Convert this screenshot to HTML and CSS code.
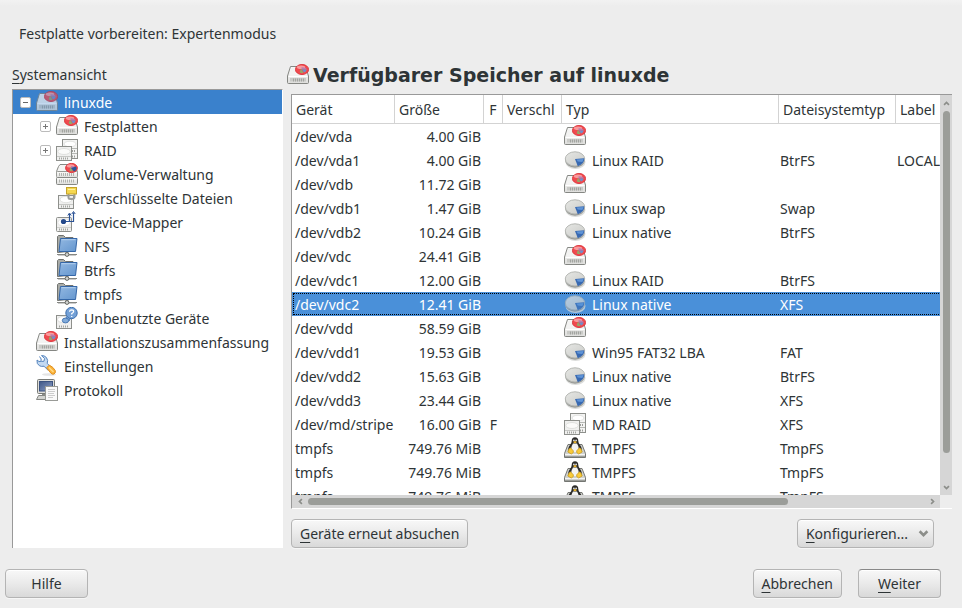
FILE: index.html
```html
<!DOCTYPE html>
<html lang="de">
<head>
<meta charset="utf-8">
<title>Festplatte vorbereiten: Expertenmodus</title>
<link rel="stylesheet" href="styles.css">
</head>
<body>
<svg class="sprite" aria-hidden="true">
  <defs>
    <linearGradient id="metal" x1="0" y1="0" x2="0" y2="1"><stop offset="0" stop-color="#fbfbfa"/><stop offset="1" stop-color="#dededc"/></linearGradient>
    <linearGradient id="plate" x1="0" y1="0" x2="1" y2="1"><stop offset="0" stop-color="#e6e7e4"/><stop offset="1" stop-color="#c9cac7"/></linearGradient>
    <linearGradient id="blue" x1="0" y1="0" x2="1" y2="1"><stop offset="0" stop-color="#93b8e1"/><stop offset="1" stop-color="#6496cf"/></linearGradient>
    <linearGradient id="screen" x1="0" y1="0" x2="1" y2="1"><stop offset="0" stop-color="#3f5786"/><stop offset="1" stop-color="#8d9fc6"/></linearGradient>
    <symbol id="disc" viewBox="0 0 14 11">
      <ellipse cx="7" cy="5.500" rx="6.600" ry="5.100" fill="#f04a4f" stroke="#d9242b" stroke-width=".8"/>
      <ellipse cx="6" cy="3.200" rx="4.200" ry="1.800" fill="#f99a9c"/>
      <path d="M6.500 5.500V3.200q4.500-.2 5.200 2.300z" fill="#b87fae"/>
      <path d="M7 5.500h4.700q-.5 2.300-2.700 3z" fill="#6c90cc"/>
      <path d="M6 4.500l2.500 4.500q-2.600.3-3.800-.8z" fill="#94a86a"/>
    </symbol>
    <symbol id="drive" viewBox="0 0 22 22">
      <path d="M3.500 2.500h15l3 9.500v6.500q0 1-1 1h-19q-1 0-1-1V12z" fill="url(#metal)" stroke="#858783"/>
      <path d="M4.500 3.500h13l2.500 8.500H2z" fill="#f3f3f2"/>
      <path d="M1.500 12.500h19" stroke="#fff"/>
      <path d="M3 14h16v3.500H3z" fill="#c9cac7"/>
      <path d="M6.500 14.500v3m2-3v3m2-3v3m2-3v3m2-3v3m2-3v3" stroke="#a3a5a1"/>
      <use href="#disc" x="8" y="0" width="14" height="11"/>
    </symbol>
    <symbol id="part" viewBox="0 0 22 22">
      <ellipse cx="11.500" cy="13" rx="10" ry="7" fill="#dcdddb"/>
      <ellipse cx="11" cy="11.500" rx="9.800" ry="7.200" fill="#999b97"/>
      <ellipse cx="11" cy="9.900" rx="9.700" ry="7.100" fill="url(#plate)" stroke="#b5b7b3"/>
      <path d="M11 10l9.300-.8q.3 5.500-6.500 8z" fill="#3869b1"/>
      <path d="M12.500 10.600l7-.6q-.2 1.800-1.300 3l-4.500-.5z" fill="#6094d6"/>
    </symbol>
    <symbol id="raid" viewBox="0 0 22 22">
      <rect x="6.500" y=".5" width="15" height="19" fill="#f4f4f3" stroke="#8e908c"/>
      <ellipse cx="14" cy="5" rx="6" ry="2.800" fill="#fff" stroke="#d6d7d4" stroke-width=".7"/>
      <path d="M7 9.500h14M7 14.500h14" stroke="#b5b7b3"/>
      <path d="M16 12h4m-4 5.500h4" stroke="#9b9d99" stroke-width="2" stroke-dasharray="1 1"/>
      <rect x=".5" y="7.500" width="15" height="14" fill="#f0f0ef" stroke="#8e908c"/>
      <ellipse cx="8" cy="12.500" rx="6.200" ry="3" fill="#fbfbfa" stroke="#d6d7d4" stroke-width=".7"/>
      <path d="M1 17.500h14" stroke="#c6c7c4"/>
      <path d="M3 19.500h10" stroke="#a3a5a1" stroke-width="2" stroke-dasharray="1 1"/>
    </symbol>
    <symbol id="volume" viewBox="0 0 22 22">
      <path d="M2.500 3.500L4 1.500h14l3.500 7v4H.5v-4z" fill="#f4f4f3" stroke="#858783"/>
      <rect x=".5" y="8.500" width="21" height="6" rx="1" fill="url(#metal)" stroke="#999b97"/>
      <rect x=".5" y="14.500" width="21" height="7" rx="1" fill="url(#metal)" stroke="#858783"/>
      <path d="M3 11.500h15M3 18h15" stroke="#b2b4b0" stroke-width="3" stroke-dasharray="1 1"/>
      <use href="#disc" x="9" y="0" width="13" height="10"/>
      <path d="M15 5l5-1.500q2 3-2 5z" fill="#27559a"/>
    </symbol>
    <symbol id="crypt" viewBox="0 0 22 22">
      <rect x="2.500" y="8.500" width="15" height="13" fill="#f0f0ef" stroke="#8e908c"/>
      <ellipse cx="10" cy="12.500" rx="6" ry="3.200" fill="#fff" stroke="#d6d7d4" stroke-width=".7"/>
      <path d="M3 17.500h14" stroke="#c6c7c4"/><path d="M5 19.500h10" stroke="#a3a5a1" stroke-width="2" stroke-dasharray="1 1"/>
      <path d="M12.500 7v3.500q0 1.500 2 1.500h1.500q2.500 0 2.500-2V7" fill="none" stroke="#9b9d99" stroke-width="2"/>
      <rect x="10.500" y=".5" width="10" height="6.500" fill="#f5d74f" stroke="#c5a22a"/>
      <path d="M12 2.500h7" stroke="#fff2a0"/>
    </symbol>
    <symbol id="mapper" viewBox="0 0 22 22">
      <rect x=".5" y="6.500" width="15" height="14" rx="1" fill="#f0f0ef" stroke="#8e908c"/>
      <ellipse cx="8" cy="11.500" rx="6.200" ry="3.600" fill="#fff" stroke="#dcdddb" stroke-width=".7"/>
      <path d="M3 18.500h10" stroke="#a3a5a1" stroke-width="2" stroke-dasharray="1 1"/>
      <path d="M1 16.500h14" stroke="#d0d1ce"/>
      <path d="M8 10.500h9.500v-9m-4 9V3" fill="none" stroke="#2c5396" stroke-width="1.200"/>
      <path d="M11.800 4.500l1.700-2.500 1.700 2.500M15.800 3L17.500.5 19.200 3" fill="none" stroke="#2c5396"/>
      <circle cx="7.500" cy="10.500" r="2.600" fill="#23488a"/>
    </symbol>
    <symbol id="netfolder" viewBox="0 0 22 22">
      <path d="M1.500 17.500V1.500l1-1h5l2 2h7.500V16z" fill="#a9aba7" stroke="#70726e"/>
      <path d="M4 4.500h12" stroke="#ddd"/>
      <path d="M4.500 3.500h16.500l-1.500 13H3z" fill="url(#blue)" stroke="#3567a8"/>
      <path d="M5.500 4.700h14" stroke="#b4d0ee"/>
      <path d="M1 19.500h20" stroke="#858783"/><path d="M2 20.500h18" stroke="#ccc"/>
      <path d="M11 17v3" stroke="#858783" stroke-width="3"/>
      <circle cx="11" cy="19.500" r="1.900" fill="#d5d6d3" stroke="#656763"/>
    </symbol>
    <symbol id="unused" viewBox="0 0 22 22">
      <rect x=".5" y="8.500" width="15" height="13" fill="#f0f0ef" stroke="#8e908c"/>
      <ellipse cx="7" cy="12.500" rx="5.500" ry="3" fill="#fff" stroke="#d6d7d4" stroke-width=".7"/>
      <path d="M3 19.500h10" stroke="#a3a5a1" stroke-width="2" stroke-dasharray="1 1"/>
      <path d="M9.500 11.500l2-2.500 3 2-1.500 3z" fill="#82abda" stroke="#4878b4"/>
      <ellipse cx="9.500" cy="13.500" rx="3.200" ry="2.400" fill="#82abda" stroke="#4878b4"/>
      <circle cx="15.500" cy="6" r="5.700" fill="#73a0d6" stroke="#3d6fae"/>
      <path d="M13.500 4.700q.2-1.900 2.200-1.900 2 .1 1.900 1.800 0 1-1.900 2v1m0 1.300v1" fill="none" stroke="#fff" stroke-width="1.300"/>
    </symbol>
    <symbol id="tools" viewBox="0 0 22 22">
      <ellipse cx="13" cy="19.500" rx="7" ry="1.300" fill="#e4e4e4"/>
      <path d="M3.500 1.500L5.200 4 5 6.300 3 6.500 1 5q-.6 4 2.500 5.800 2 1 4.500.4l4 4 3-3-3.800-3.800q1.300-3-.8-5.900Q8.300.3 5.500.6l3 2.900-.5 2.700-2.700.3" fill="#c3d9f1" stroke="#5685be"/>
      <path d="M10.600 12.800l2.700-2.700q4.300 2 6 5.600.6 2.600-1.500 3.400-1.600.5-3-1z" fill="#fbb338" stroke="#e08e1e"/>
      <path d="M13 12.500l4.500 4.500" stroke="#ffda86" stroke-width="1.500"/>
    </symbol>
    <symbol id="log" viewBox="0 0 22 22">
      <rect x="1.500" y=".5" width="17" height="14" rx="1" fill="#ddddda" stroke="#777975"/>
      <rect x="3.500" y="2.500" width="13" height="9.500" fill="url(#screen)" stroke="#3b5280"/>
      <path d="M6 15h6v2H6z" fill="#8a8c88"/>
      <path d="M2.500 16.500h12v4H.5z" fill="#d3d4d1" stroke="#858783"/>
      <rect x="9.500" y="7.500" width="12" height="14" fill="#fafafa" stroke="#999b97"/>
      <path d="M12 10.500h7m-7 2h7m-7 2h6m-6 2h7m-7 2h5" stroke="#ccc"/>
    </symbol>
    <symbol id="tux" viewBox="0 0 22 22">
      <path d="M4 7.500h14l3.500 9v4H.5v-4z" fill="#d0d1ce" stroke="#747672"/>
      <path d="M1 17.500h20" stroke="#f4f4f3"/><path d="M1 19.500h20" stroke="#9b9d99"/>
      <path d="M11 .3q3.200 0 3.300 3.600 0 2 1.700 4 2.800 3.600 1.200 7H4.800q-1.600-3.400 1.200-7 1.700-2 1.700-4Q7.800.3 11 .3z" fill="#2a2a29"/>
      <path d="M9 6.500h4q2.800 4.500 1.200 8.500H7.800Q6.200 11 9 6.500z" fill="#f3f3f2"/>
      <circle cx="9.900" cy="3.400" r=".9" fill="#ddd"/><circle cx="12.100" cy="3.400" r=".9" fill="#ddd"/>
      <path d="M9 5.100L11 4.100l2 1L11 6.600z" fill="#f1b82c"/>
      <path d="M3.800 15l1.200-3 1.500-1.200 2.800 3v1.700l-2 1.500zM18.200 15l-1.200-3-1.500-1.200-2.800 3v1.700l2 1.500z" fill="#f9ca38" stroke="#c79c22" stroke-width=".8"/>
    </symbol>
    <symbol id="chev" viewBox="0 0 10 10"><path d="M1.500 3L5 6.500 8.500 3" fill="none" stroke="#8c8e8a" stroke-width="2.400"/></symbol>
  </defs>
</svg>

<p class="intro">Festplatte vorbereiten: Expertenmodus</p>

<main class="panes">
  <section class="side">
    <h2 class="side-title" id="tree-label"><span class="key">S</span>ystemansicht</h2>
    <ul class="tree" aria-labelledby="tree-label">
      <li>
        <div class="node selected"><button class="expander" aria-label="Zuklappen"></button><svg class="icon"><use href="#drive"/></svg>linuxde</div>
        <ul>
          <li class="node"><button class="expander plus" aria-label="Aufklappen"></button><svg class="icon"><use href="#drive"/></svg>Festplatten</li>
          <li class="node"><button class="expander plus" aria-label="Aufklappen"></button><svg class="icon"><use href="#raid"/></svg>RAID</li>
          <li class="node leaf"><svg class="icon"><use href="#volume"/></svg>Volume-Verwaltung</li>
          <li class="node leaf"><svg class="icon"><use href="#crypt"/></svg>Verschlüsselte Dateien</li>
          <li class="node leaf"><svg class="icon"><use href="#mapper"/></svg>Device-Mapper</li>
          <li class="node leaf"><svg class="icon"><use href="#netfolder"/></svg>NFS</li>
          <li class="node leaf"><svg class="icon"><use href="#netfolder"/></svg>Btrfs</li>
          <li class="node leaf"><svg class="icon"><use href="#netfolder"/></svg>tmpfs</li>
          <li class="node leaf"><svg class="icon"><use href="#unused"/></svg>Unbenutzte Geräte</li>
        </ul>
      </li>
      <li class="node leaf"><svg class="icon"><use href="#drive"/></svg>Installationszusammenfassung</li>
      <li class="node leaf"><svg class="icon"><use href="#tools"/></svg>Einstellungen</li>
      <li class="node leaf"><svg class="icon"><use href="#log"/></svg>Protokoll</li>
    </ul>
  </section>

  <section class="detail">
    <h1 class="title"><svg class="icon"><use href="#drive"/></svg>Verfügbarer Speicher auf linuxde</h1>
    <div class="frame">
      <div class="view">
        <table>
          <colgroup><col class="c-dev"><col class="c-size"><col class="c-f"><col class="c-enc"><col class="c-type"><col class="c-fs"><col class="c-label"></colgroup>
          <thead><tr><th>Gerät</th><th>Größe</th><th>F</th><th>Verschl</th><th>Typ</th><th>Dateisystemtyp</th><th>Label</th></tr></thead>
          <tbody>
            <tr><td>/dev/vda</td><td>4.00 GiB</td><td></td><td></td><td><span class="type"><svg class="icon"><use href="#drive"/></svg></span></td><td></td><td></td></tr>
            <tr><td>/dev/vda1</td><td>4.00 GiB</td><td></td><td></td><td><span class="type"><svg class="icon"><use href="#part"/></svg>Linux RAID</span></td><td>BtrFS</td><td>LOCAL</td></tr>
            <tr><td>/dev/vdb</td><td>11.72 GiB</td><td></td><td></td><td><span class="type"><svg class="icon"><use href="#drive"/></svg></span></td><td></td><td></td></tr>
            <tr><td>/dev/vdb1</td><td>1.47 GiB</td><td></td><td></td><td><span class="type"><svg class="icon"><use href="#part"/></svg>Linux swap</span></td><td>Swap</td><td></td></tr>
            <tr><td>/dev/vdb2</td><td>10.24 GiB</td><td></td><td></td><td><span class="type"><svg class="icon"><use href="#part"/></svg>Linux native</span></td><td>BtrFS</td><td></td></tr>
            <tr><td>/dev/vdc</td><td>24.41 GiB</td><td></td><td></td><td><span class="type"><svg class="icon"><use href="#drive"/></svg></span></td><td></td><td></td></tr>
            <tr><td>/dev/vdc1</td><td>12.00 GiB</td><td></td><td></td><td><span class="type"><svg class="icon"><use href="#part"/></svg>Linux RAID</span></td><td>BtrFS</td><td></td></tr>
            <tr class="selected"><td>/dev/vdc2</td><td>12.41 GiB</td><td></td><td></td><td><span class="type"><svg class="icon"><use href="#part"/></svg>Linux native</span></td><td>XFS</td><td></td></tr>
            <tr><td>/dev/vdd</td><td>58.59 GiB</td><td></td><td></td><td><span class="type"><svg class="icon"><use href="#drive"/></svg></span></td><td></td><td></td></tr>
            <tr><td>/dev/vdd1</td><td>19.53 GiB</td><td></td><td></td><td><span class="type"><svg class="icon"><use href="#part"/></svg>Win95 FAT32 LBA</span></td><td>FAT</td><td></td></tr>
            <tr><td>/dev/vdd2</td><td>15.63 GiB</td><td></td><td></td><td><span class="type"><svg class="icon"><use href="#part"/></svg>Linux native</span></td><td>BtrFS</td><td></td></tr>
            <tr><td>/dev/vdd3</td><td>23.44 GiB</td><td></td><td></td><td><span class="type"><svg class="icon"><use href="#part"/></svg>Linux native</span></td><td>XFS</td><td></td></tr>
            <tr><td>/dev/md/stripe</td><td>16.00 GiB</td><td>F</td><td></td><td><span class="type"><svg class="icon"><use href="#raid"/></svg>MD RAID</span></td><td>XFS</td><td></td></tr>
            <tr><td>tmpfs</td><td>749.76 MiB</td><td></td><td></td><td><span class="type"><svg class="icon"><use href="#tux"/></svg>TMPFS</span></td><td>TmpFS</td><td></td></tr>
            <tr><td>tmpfs</td><td>749.76 MiB</td><td></td><td></td><td><span class="type"><svg class="icon"><use href="#tux"/></svg>TMPFS</span></td><td>TmpFS</td><td></td></tr>
            <tr><td>tmpfs</td><td>749.76 MiB</td><td></td><td></td><td><span class="type"><svg class="icon"><use href="#tux"/></svg>TMPFS</span></td><td>TmpFS</td><td></td></tr>
          </tbody>
        </table>
      </div>
      <div class="bar vertical">
        <button aria-label="Nach oben"><svg class="arrow up"><use href="#chev"/></svg></button>
        <div class="track"><div class="thumb"></div></div>
        <button aria-label="Nach unten"><svg class="arrow"><use href="#chev"/></svg></button>
      </div>
      <div class="bar horizontal">
        <button aria-label="Nach links"><svg class="arrow left"><use href="#chev"/></svg></button>
        <div class="track"><div class="thumb"></div></div>
        <button aria-label="Nach rechts"><svg class="arrow right"><use href="#chev"/></svg></button>
      </div>
    </div>
    <div class="actions">
      <button class="btn"><span><span class="key">G</span>eräte erneut absuchen</span></button>
      <button class="btn menu" aria-haspopup="menu"><span><span class="key">K</span>onfigurieren...</span><svg class="caret"><use href="#chev"/></svg></button>
    </div>
  </section>
</main>

<footer class="footer">
  <button class="btn wide help">Hilfe</button>
  <button class="btn"><span><span class="key">A</span>bbrechen</span></button>
  <button class="btn wide next"><span><span class="key">W</span>eiter</span></button>
</footer>
</body>
</html>
```
FILE: styles.css
```css
* { box-sizing: border-box; }

body {
  margin: 0;
  height: 100vh;
  display: flex;
  flex-direction: column;
  overflow: hidden;
  background: linear-gradient(#f2f2f2, #ededed 6px);
  color: #2e3436;
  font: 14px/24px "Noto Sans", "Open Sans", sans-serif;
}

button { font: inherit; color: inherit; }
ul { list-style: none; margin: 0; padding: 0; }
.sprite { position: absolute; width: 0; height: 0; }
.icon { width: 22px; height: 22px; flex: none; }
.key { text-decoration: underline; text-underline-offset: 3px; text-decoration-skip-ink: none; }

.intro { margin: 0; padding: 22px 19px 0; }

.panes {
  flex: 1;
  min-height: 0;
  display: flex;
  gap: 4px;
  padding: 16px 10px 0 12px;
}

.side { flex: 0 0 271px; display: flex; flex-direction: column; }
.side-title { margin: 0; padding-bottom: 2px; font: inherit; line-height: 25px; }
.tree {
  flex: 1;
  background: #fff;
  border: 1px solid #fff;
  border-top-color: #999;
  border-left-color: #999;
  border-bottom: 0;
}
.tree ul .node { padding-left: 27px; }
.tree ul .leaf { padding-left: 43px; }
.node { display: flex; align-items: flex-start; height: 24px; padding-left: 7px; line-height: 26px; white-space: nowrap; }
.node .icon { margin: 1px 6px 0 0; }
.leaf { padding-left: 23px; }
.node.selected { background: #3a81cc; color: #fff; }
.node.selected .icon, tr.selected .icon { opacity: .7; }

.expander {
  width: 11px;
  height: 11px;
  flex: none;
  margin: 7px 5px 0 0;
  padding: 0;
  border: 1px solid #bbb;
  border-radius: 2px;
  background: linear-gradient(#666, #666) center / 5px 1px no-repeat #fff;
}
.expander.plus {
  background: linear-gradient(#777, #777) center / 5px 1px no-repeat, linear-gradient(#777, #777) center / 1px 5px no-repeat, #fff;
}

.detail { flex: 1; min-width: 0; display: flex; flex-direction: column; }
.title {
  display: flex;
  align-items: center;
  gap: 4px;
  margin: 0;
  padding-bottom: 6px;
  font: bold 19px/26px "DejaVu Sans", sans-serif;
  white-space: nowrap;
}

.frame {
  flex: 1;
  min-height: 0;
  margin-left: 4px;
  display: grid;
  grid-template: minmax(0, 1fr) 13px / minmax(0, 1fr) 12px;
  border-top: 1px solid #999;
  border-left: 1px solid #999;
  border-bottom: 1px solid #fff;
}
.view { overflow: hidden; background: #fff; }

table { width: 836px; table-layout: fixed; border-collapse: separate; border-spacing: 0; white-space: nowrap; }
.c-dev { width: 103px; }
.c-size { width: 89px; }
.c-f { width: 19px; }
.c-enc { width: 59px; }
.c-type { width: 217px; }
.c-fs { width: 117px; }
th {
  height: 29px;
  padding: 2px 4px 0;
  font-weight: normal;
  text-align: left;
  border-right: 1px solid #d3d3d3;
  border-bottom: 1px solid #d3d3d3;
}
td { height: 24px; padding: 2px 1px 0; line-height: 22px; }
td:first-child { padding-left: 3px; }
td:nth-child(2) { text-align: right; padding-right: 3px; }
td:nth-child(3), th:nth-child(3) { text-align: center; padding-left: 0; padding-right: 0; }
td:nth-child(5) { padding-left: 2px; }
.type { display: flex; align-items: flex-start; gap: 6px; height: 22px; }
.type .icon { margin-top: -1px; }
tr.selected { background: #4a90d9; color: #fff; outline: 1px dotted #000; outline-offset: -2px; }

.bar { display: flex; background: #d6d6d6; }
.bar button { border: 0; padding: 0; background: none; display: grid; place-items: center; flex: 0 0 16px; }
.vertical { flex-direction: column; }
.track { flex: 1; }
.thumb { background: #9b9d99; border-radius: 4px; }
.vertical .track { padding: 0 2px 0 3px; }
.vertical .thumb { height: 93%; }
.horizontal .track { padding: 3px 0; }
.horizontal .thumb { width: 78%; height: 7px; }
.arrow { width: 7px; height: 7px; }
.up { transform: rotate(180deg); }
.left { transform: rotate(90deg); }
.right { transform: rotate(-90deg); }

.actions { display: flex; justify-content: space-between; padding: 10px 18px 0 4px; }
.btn {
  height: 29px;
  padding: 0 8px;
  border: 1px solid #b4b4b4;
  border-radius: 4px;
  background: linear-gradient(#f8f8f8, #eaeaea 50%, #d9d9d9);
  box-shadow: inset 0 1px #fff, 0 1px #f6f6f6;
  white-space: nowrap;
}
.menu { display: flex; align-items: center; gap: 10px; padding-right: 4px; }
.caret { width: 11px; height: 11px; }

.footer { display: flex; gap: 16px; padding: 21px 21px 10px 5px; }
.wide { width: 83px; }
.help { margin-right: auto; }
.next { border-top-color: #888; }
```
